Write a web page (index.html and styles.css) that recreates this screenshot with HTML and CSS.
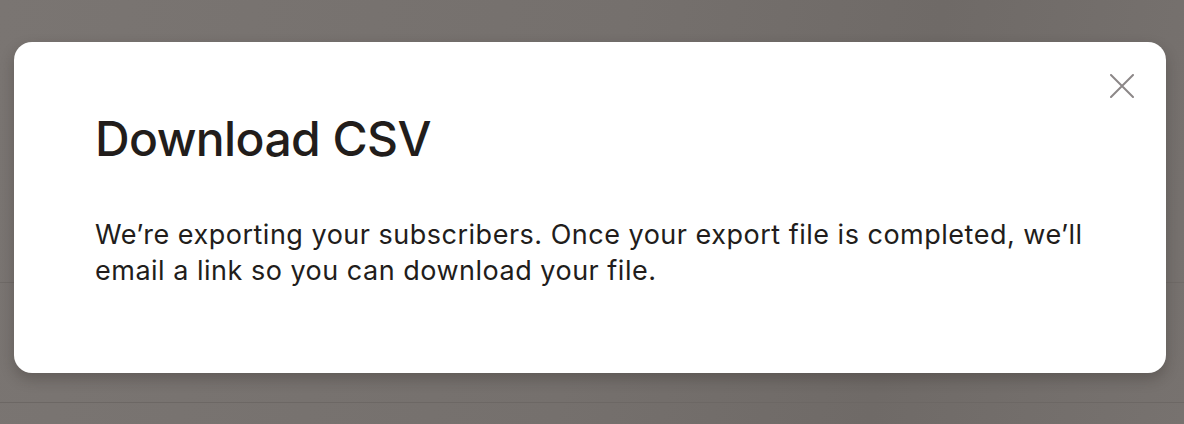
FILE: index.html
```html
<!DOCTYPE html>
<html lang="en">
<head>
<meta charset="utf-8">
<title>Download CSV</title>
<link rel="stylesheet" href="styles.css">
</head>
<body>
  <div class="page">
    <div class="page-row page-row--top"></div>
    <div class="page-row page-row--mid"></div>
    <div class="page-row page-row--end"></div>
  </div>

  <div class="overlay">
    <div class="dialog" role="dialog" aria-labelledby="dialog-title">
      <button class="dialog-close" type="button" aria-label="Close">
        <svg width="24" height="24" viewBox="0 0 24 24" fill="none" stroke="currentColor" stroke-width="2" stroke-linecap="round">
          <path d="M1 1 L23 23 M23 1 L1 23"/>
        </svg>
      </button>
      <h2 class="dialog-title" id="dialog-title">Download CSV</h2>
      <p class="dialog-text">We’re exporting your subscribers. Once your export file is completed, we’ll email a link so you can download your file.</p>
    </div>
  </div>
</body>
</html>
```
FILE: styles.css
```css
* {
  box-sizing: border-box;
}

html, body {
  margin: 0;
  height: 100%;
}

body {
  background: #77716e;
  font-family: Inter, "Noto Sans", sans-serif;
  overflow: hidden;
  position: relative;
}

/* dimmed page underneath the dialog */
.page {
  display: flex;
  flex-direction: column;
  height: 100%;
  background: linear-gradient(100deg, #7a7572 0%, #75706d 50%, #6f6a67 75%, #77726f 100%);
}

.page-row--top {
  height: 283px;
  border-bottom: 1px solid #6f6a67;
}

.page-row--mid {
  height: 120px;
  border-bottom: 1px solid #6c6764;
}

.page-row--end {
  flex: 1;
}

.overlay {
  position: absolute;
  inset: 0;
  padding: 42px 18px 0 14px;
}

.dialog {
  position: relative;
  background: #ffffff;
  border-radius: 18px;
  height: 331px;
  padding: 73px 70px 0 81px;
  box-shadow: 0 6px 14px rgba(40, 34, 30, 0.28);
  color: #221d1b;
}

.dialog-close {
  position: absolute;
  top: 32px;
  right: 32px;
  width: 24px;
  height: 24px;
  padding: 0;
  border: 0;
  background: none;
  color: #8c8788;
  display: flex;
}

.dialog-title {
  margin: 0 0 54px;
  font-size: 48px;
  line-height: 48px;
  font-weight: 500;
  letter-spacing: -0.6px;
}

.dialog-text {
  margin: 0;
  max-width: 1000px;
  font-size: 27px;
  line-height: 36px;
  font-weight: 400;
  letter-spacing: 0.5px;
}
```
